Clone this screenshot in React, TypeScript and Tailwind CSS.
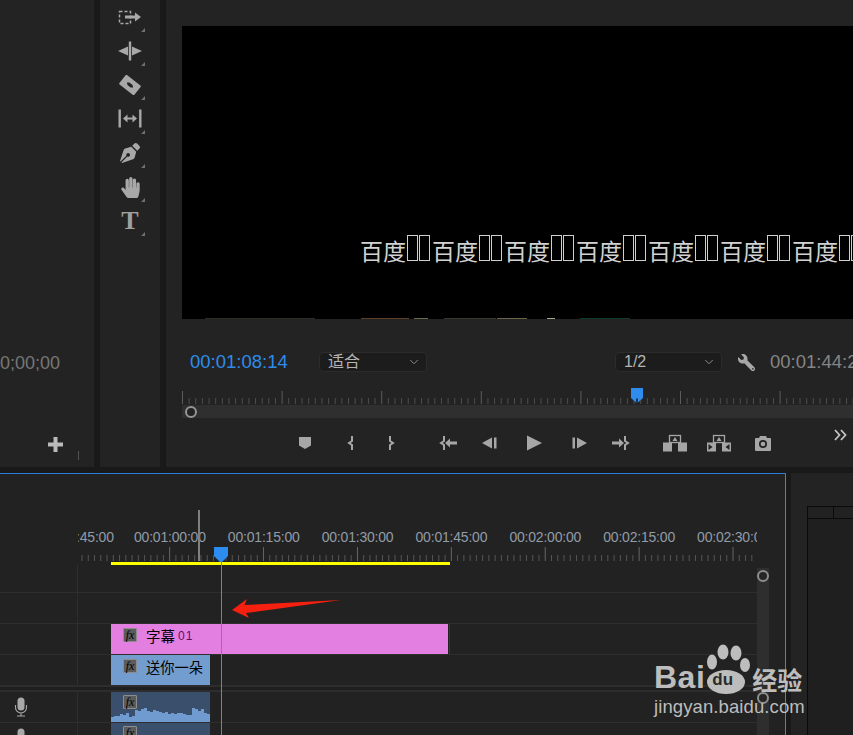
import { ChevronDown } from 'lucide-react';
import { FaHandPaper, FaPenNib, FaWrench } from 'react-icons/fa';
import type { ReactNode } from 'react';

const rulerLabels = ['00:00:45:00', '00:01:00:00', '00:01:15:00', '00:01:30:00', '00:01:45:00', '00:02:00:00', '00:02:15:00', '00:02:30:00'];
const wave = [5, 6, 6, 8, 7, 9, 5, 6, 12, 11, 13, 14, 11, 10, 12, 11, 10, 9, 10, 8, 9, 8, 9, 9, 8, 7, 7, 14, 13, 11, 13, 9, 8];
const noise = [
  [23, 110, '#2c2c26'], [179, 48, '#5a3f26'], [232, 14, '#6a6a50'], [262, 52, '#3a382c'], [315, 30, '#6e6248'], [365, 8, '#a8a488'], [398, 50, '#0f3a30'],
];

function Corner() {
  return <span className="absolute bottom-[2px] right-[15px] h-0 w-0 border-b-[4px] border-l-[4px] border-b-[#707070] border-l-transparent" />;
}

function Tool({ children }: { children: ReactNode }) {
  return (
    <div className="relative flex h-[34px] items-center justify-center text-[#a8a8a8]">
      {children}
      <Corner />
    </div>
  );
}

function ToolIcon({ children }: { children: ReactNode }) {
  return (
    <svg width="26" height="20" viewBox="0 0 26 20" fill="currentColor">
      {children}
    </svg>
  );
}

function CtrlIcon({ children, className = '', w = 20 }: { children: ReactNode; className?: string; w?: number }) {
  return (
    <svg width={w} height="20" viewBox={`0 0 ${w} 20`} fill="#a6a6a6" className={`shrink-0 ${className}`}>
      {children}
    </svg>
  );
}

function Select({ label, className = '' }: { label: string; className?: string }) {
  return (
    <div className={`flex h-[20px] shrink-0 items-center justify-between rounded-sm border border-[#2c2c2c] bg-[#1c1c1c] pl-2 pr-1 text-[#b4b4b4] ${className}`}>
      <span className="text-[16px] leading-none">{label}</span>
      <ChevronDown size={14} strokeWidth={1.5} className="mr-[1px] text-[#9a9a9a]" />
    </div>
  );
}

function Fx() {
  return (
    <span className="flex h-[14px] w-[14px] shrink-0 items-center justify-center rounded-[1px] border border-[#8c8c8c] bg-[#5c5c5c] font-['Liberation_Serif',serif] text-[12px] italic leading-none text-black">
      fx
    </span>
  );
}

function Mic() {
  return (
    <svg width="14" height="20" viewBox="0 0 14 20" className="ml-[14px] shrink-0">
      <rect x="3.5" y="0.5" width="7" height="13" rx="3.5" fill="#a8a8a8" />
      <path d="M1.5 8v2.5a5.5 5.5 0 0 0 11 0V8M7 16v2.5M3 19h8" fill="none" stroke="#a8a8a8" strokeWidth="1.1" />
    </svg>
  );
}

function Track({ h, head, children }: { h: string; head?: ReactNode; children?: ReactNode }) {
  return (
    <div className={`flex border-b border-[#2e2e2e] ${h}`}>
      <div className="flex w-[78px] shrink-0 items-start border-r border-[#2e2e2e] pt-[5px]">{head}</div>
      <div className="flex min-w-0 flex-1 pl-[33px]">{children}</div>
    </div>
  );
}

function ToolsColumn() {
  return (
    <div className="w-[60px] shrink-0 bg-[#232323]">
      <Tool>
        <ToolIcon>
          <rect x="2.5" y="4.5" width="11" height="12" fill="none" stroke="currentColor" strokeWidth="1.5" strokeDasharray="3 2" />
          <polygon points="8,8.5 18,8.5 18,5.5 24,10 18,14.5 18,11.5 8,11.5" />
        </ToolIcon>
      </Tool>
      <Tool>
        <ToolIcon>
          <rect x="11.8" y="0.5" width="2.4" height="19" />
          <polygon points="1,10 11,5.5 11,14.5" />
          <polygon points="15,5.5 15,14.5 25,10" />
        </ToolIcon>
      </Tool>
      <Tool>
        <ToolIcon>
          <g transform="rotate(38 13 10)">
            <rect x="3.5" y="4" width="19" height="12" rx="1" />
            <polygon points="9,10 11,8.5 15,8.5 17,10 15,11.5 11,11.5" fill="#232323" />
          </g>
        </ToolIcon>
      </Tool>
      <Tool>
        <ToolIcon>
          <rect x="1.5" y="0.5" width="2.4" height="18" />
          <rect x="22.1" y="0.5" width="2.4" height="18" />
          <polygon points="6,9.5 10.5,5.5 10.5,8.5 15.5,8.5 15.5,5.5 20,9.5 15.5,13.5 15.5,10.5 10.5,10.5 10.5,13.5" />
        </ToolIcon>
      </Tool>
      <Tool>
        <FaPenNib size={20} />
      </Tool>
      <Tool>
        <FaHandPaper size={21} />
      </Tool>
      <Tool>
        <span className="font-['Liberation_Serif',serif] text-[26px] font-bold leading-none text-[#a0a0a0]">T</span>
      </Tool>
    </div>
  );
}

function MonitorRuler() {
  const ticks = [];
  for (let i = 0; i < 102; i++) {
    const major = i % 15 === 0;
    ticks.push(<line key={i} x1={i * 6.64 + 0.5} x2={i * 6.64 + 0.5} y1={major ? 3 : 10} y2={16} stroke={major ? '#5c5c5c' : '#4e4e4e'} />);
  }
  return (
    <div className="relative h-[17px]">
      <svg width="671" height="17">{ticks}</svg>
      <svg width="14" height="16" viewBox="0 0 14 16" className="absolute left-[448px] top-[-1px]">
        <path d="M1 1h12v10l-5 4.5h-2l-5-4.5z" fill="#2f8bec" />
        <rect x="6.3" y="11.5" width="1.4" height="4" fill="#111" />
      </svg>
    </div>
  );
}

function Monitor() {
  return (
    <div className="min-w-0 flex-1 overflow-hidden bg-[#232323] pl-4 pt-[26px]">
      <div className="relative flex h-[293px] items-end overflow-hidden bg-black pb-[54px] pl-[178px] font-['Noto_Sans_CJK_SC','Liberation_Sans',sans-serif] text-[#d2d2d2]">
        {[0, 1, 2, 3, 4, 5, 6].map((i) => (
          <div key={i} className="flex shrink-0 items-end">
            <span className="w-[47px] whitespace-nowrap text-[23px] leading-[30px]">百度</span>
            <span className="mb-[4px] h-[26px] w-[11px] border border-[#cfcfcf]" />
            <span className="mb-[4px] ml-[1px] mr-[2px] h-[26px] w-[11px] border border-[#cfcfcf]" />
          </div>
        ))}
        <svg width="671" height="1" className="absolute bottom-0 left-0">
          {noise.map(([x, w, c]) => (
            <rect key={x as number} x={x as number} y="0" width={w as number} height="1" fill={c as string} />
          ))}
        </svg>
      </div>

      <div className="mt-[33px] flex h-[20px] items-center whitespace-nowrap pl-2">
        <span className="w-[129px] shrink-0 text-[18.5px] leading-none text-[#2d8ceb]">00:01:08:14</span>
        <Select label="适合" className="w-[108px]" />
        <Select label="1/2" className="ml-[188px] w-[107px]" />
        <FaWrench size={17} className="ml-[16px] shrink-0 -scale-x-100 text-[#a8a8a8]" />
        <span className="ml-[15px] shrink-0 text-[18.5px] leading-none text-[#858585]">00:01:44:22</span>
      </div>

      <div className="mt-[16px]">
        <MonitorRuler />
      </div>
      <div className="flex h-[13px] items-center bg-[#2f2f2f] pl-[3px]">
        <span className="h-[12px] w-[12px] rounded-full border-[2.5px] border-[#969696] bg-[#232323]" />
      </div>

      <div className="ml-[-16px] mt-[15px] flex h-[20px] pl-[129px]">
        <CtrlIcon>
          <polygon points="4,4 16,4 16,12.5 10,16 4,12.5" />
        </CtrlIcon>
        <CtrlIcon className="ml-[26px]">
          <path d="M11 3v5l-3 2 3 2v5" fill="none" stroke="#a6a6a6" strokeWidth="2" />
        </CtrlIcon>
        <CtrlIcon className="ml-[20px]">
          <path d="M9 3v5l3 2-3 2v5" fill="none" stroke="#a6a6a6" strokeWidth="2" />
        </CtrlIcon>
        <CtrlIcon className="ml-[37px]">
          <path d="M6 3v5l-3 2 3 2v5" fill="none" stroke="#a6a6a6" strokeWidth="2" />
          <polygon points="7,10 12,5.5 12,8.5 19,8.5 19,11.5 12,11.5 12,14.5" />
        </CtrlIcon>
        <CtrlIcon className="ml-[22px]">
          <polygon points="2,10 12,4.5 12,15.5" />
          <rect x="14" y="4.5" width="2.5" height="11" />
        </CtrlIcon>
        <CtrlIcon className="ml-[24px]">
          <polygon points="3,2.5 18,10 3,17.5" />
        </CtrlIcon>
        <CtrlIcon className="ml-[25px]">
          <rect x="3.5" y="4.5" width="2.5" height="11" />
          <polygon points="8,4.5 18,10 8,15.5" />
        </CtrlIcon>
        <CtrlIcon className="ml-[22px]">
          <polygon points="1,8.5 8,8.5 8,5.5 13,10 8,14.5 8,11.5 1,11.5" />
          <path d="M14 3v5l3 2-3 2v5" fill="none" stroke="#a6a6a6" strokeWidth="2" />
        </CtrlIcon>
        <CtrlIcon w={24} className="ml-[32px]">
          <rect x="0" y="9.5" width="9" height="9" />
          <rect x="15" y="9.5" width="9" height="9" />
          <rect x="6.5" y="2.5" width="11" height="7" fill="none" stroke="#a6a6a6" strokeWidth="1.3" />
          <polygon points="12,4 9.5,8 14.5,8" />
        </CtrlIcon>
        <CtrlIcon w={24} className="ml-[20px]">
          <rect x="0" y="9.5" width="9" height="9" />
          <rect x="15" y="9.5" width="9" height="9" />
          <polygon points="1.5,11 5.5,14 1.5,17" fill="#232323" />
          <polygon points="22.5,11 18.5,14 22.5,17" fill="#232323" />
          <rect x="6.5" y="2.5" width="11" height="7" fill="none" stroke="#a6a6a6" strokeWidth="1.3" />
          <polygon points="12,4 9.5,8 14.5,8" />
        </CtrlIcon>
        <CtrlIcon className="ml-[22px]">
          <path d="M6 5l1-2h6l1 2h3a1 1 0 0 1 1 1v11a1 1 0 0 1-1 1H3a1 1 0 0 1-1-1V6a1 1 0 0 1 1-1z" />
          <circle cx="10" cy="11" r="3.2" fill="none" stroke="#232323" strokeWidth="1.7" />
        </CtrlIcon>
        <svg width="14" height="14" viewBox="0 0 14 14" className="ml-[60px] mt-[-5px] shrink-0">
          <path d="M2 2l4.5 5L2 12M8 2l4.5 5L8 12" fill="none" stroke="#c4c4c4" strokeWidth="1.8" />
        </svg>
      </div>
    </div>
  );
}

function TimelineRuler() {
  const ticks = [];
  for (let i = 0; i < 108; i++) {
    const x = 4 + i * 6.26;
    const major = (i - 14) % 15 === 0;
    ticks.push(<line key={i} x1={x} x2={x} y1={major ? 0 : 8} y2={14} stroke={major ? '#666666' : '#565656'} />);
  }
  return (
    <div className="h-[91px] w-[679px] overflow-hidden pt-[55px]">
      <div className="ml-[-36px] flex h-[16px] items-center">
        {rulerLabels.map((t, i) => (
          <span key={t} className={`${i === 0 ? 'w-[92px]' : 'w-[93.85px]'} shrink-0 whitespace-nowrap text-[14px] leading-none tracking-[-0.2px] text-[#919ca7]`}>
            {t}
          </span>
        ))}
      </div>
      <svg width="679" height="14" className="mt-[2px] block">{ticks}</svg>
      <div className="ml-[33px] mt-[1px] h-[3px] w-[339px] bg-[#ffff00]" />
    </div>
  );
}

function Timeline() {
  return (
    <div className="relative flex w-[786px] shrink-0 overflow-hidden border-r border-t border-r-[#1f8cff] border-t-[#2a80d8] bg-[#222222]">
      <div className="w-[757px] shrink-0">
        <div className="flex">
          <div className="w-[78px] shrink-0" />
          <TimelineRuler />
        </div>
        <Track h="h-[28px]" />
        <Track h="h-[31px]" />
        <Track h="h-[31px]">
          <div className="flex h-[30px] w-[337px] items-start bg-[#e47fe2] pl-[12px] pt-[4px] font-['Noto_Sans_CJK_SC',sans-serif] text-black">
            <Fx />
            <span className="ml-[9px] text-[14.5px] leading-[15px]">字幕</span>
            <span className="ml-[3px] font-['Liberation_Sans',sans-serif] text-[12px] leading-[16px] tracking-[1px] text-[#5a0f6a]">01</span>
          </div>
          <div className="ml-[1px] h-[30px] w-px bg-[#383838]" />
        </Track>
        <div className="flex h-[30px]">
          <div className="w-[78px] shrink-0 border-r border-[#2e2e2e]" />
          <div className="ml-[33px] flex h-[30px] w-[99px] items-start bg-[#739dcf] pl-[12px] pt-[4px] font-['Noto_Sans_CJK_SC',sans-serif] text-black">
            <Fx />
            <span className="ml-[9px] whitespace-nowrap text-[14.25px] leading-[15px]">送你一朵</span>
          </div>
        </div>
        <div className="h-[2px] bg-[#2d2d2d]" />
        <div className="h-[3px] bg-[#1f1f1f]" />
        <div className="h-[2px] bg-[#2d2d2d]" />
        <Track h="h-[31px]" head={<Mic />}>
          <div className="relative h-[30px] w-[99px] bg-[#3a4f6c] pl-[12px] pt-[3px]">
            <svg width="99" height="30" className="absolute left-0 top-0">
              {wave.map((v, i) => (
                <rect key={i} x={i * 3} y={30 - v} width="3" height={v} fill="#6f9bd0" />
              ))}
            </svg>
            <div className="relative">
              <Fx />
            </div>
          </div>
        </Track>
        <Track h="h-[31px]" head={<Mic />}>
          <div className="h-[30px] w-[99px] bg-[#3a4f6c] pl-[12px] pt-[3px]">
            <Fx />
          </div>
        </Track>
      </div>

      <div className="mt-[94px] flex w-[12px] shrink-0 flex-col items-center bg-[#2e2e2e] pt-[2px]">
        <span className="h-[12px] w-[12px] shrink-0 rounded-full border-[2.5px] border-[#8e8e8e] bg-[#262626]" />
        <span className="mt-[110px] h-[12px] w-[12px] shrink-0 rounded-full border-[2.5px] border-[#8e8e8e] bg-[#262626]" />
      </div>

      {/* playhead, in/out handle and the arrow sit on top of the tracks */}
      <div className="absolute left-[198px] top-[36px] h-[51px] w-[2px] bg-[#7f7f7f]" />
      <svg width="14" height="15" viewBox="0 0 14 15" className="absolute left-[214px] top-[73px]">
        <path d="M0 0h14v9l-6 6h-2l-6-6z" fill="#2d8cf0" />
      </svg>
      <div className="absolute bottom-0 left-[221px] top-[87px] w-px bg-[#3f90e4]" />
      <svg width="112" height="22" viewBox="0 0 112 22" className="absolute left-[231px] top-[124px]">
        <polygon points="1,12 16,1 13.5,7 110,2 15,15 18,20" fill="#f5200f" />
      </svg>
    </div>
  );
}

function Watermark() {
  return (
    <div className="pointer-events-none absolute left-[654px] top-[640px] w-[155px] text-[#bdbdbd]">
      <div className="flex h-[55px] items-end">
        <span className="text-[32px] font-bold leading-[36px] tracking-[0.5px]">Bai</span>
        <div className="relative ml-[1px] h-[55px] w-[46px] shrink-0">
          <svg width="46" height="55" viewBox="0 0 46 55" className="absolute left-0 top-0">
            <ellipse cx="17" cy="12" rx="5.5" ry="7.5" fill="#bdbdbd" />
            <ellipse cx="30" cy="13" rx="5.5" ry="7.5" fill="#bdbdbd" />
            <ellipse cx="6" cy="22" rx="5" ry="7.5" fill="#bdbdbd" />
            <ellipse cx="39" cy="25" rx="5" ry="7" fill="#bdbdbd" />
            <ellipse cx="20" cy="42" rx="19" ry="12" fill="#bdbdbd" />
          </svg>
          <span className="absolute left-[6px] top-[31px] text-[17px] font-bold leading-none text-[#2a2a2a]">du</span>
        </div>
        <span className="whitespace-nowrap font-['Noto_Sans_CJK_SC',sans-serif] text-[25px] font-bold leading-[32px]">经验</span>
      </div>
      <div className="mt-[2px] whitespace-nowrap text-[18.5px] leading-[20px] tracking-[0.1px]">jingyan.baidu.com</div>
    </div>
  );
}

export default function App() {
  return (
    <div className="relative flex h-[735px] w-[853px] flex-col overflow-hidden bg-[#191919] font-['Liberation_Sans','Noto_Sans_CJK_SC',sans-serif]">
      <div className="flex h-[467px] shrink-0 gap-[6px]">
        <div className="w-[94px] shrink-0 overflow-hidden bg-[#232323] pt-[355px]">
          <div className="flex w-[60px] justify-end overflow-hidden text-[18px] leading-4 text-[#777777]">
            <span className="shrink-0">00;00;00</span>
          </div>
          <div className="mt-[66px] flex items-start pl-[48px]">
            <svg width="15" height="15" viewBox="0 0 15 15" className="shrink-0">
              <path d="M5.5 0h4v5.5H15v4H9.5V15h-4V9.5H0v-4h5.5z" fill="#bababa" />
            </svg>
            <span className="ml-[15px] mt-[14px] h-[9px] w-px bg-[#555555]" />
          </div>
        </div>
        <ToolsColumn />
        <Monitor />
      </div>

      <div className="mt-[6px] flex min-h-0 flex-1">
        <Timeline />
        <div className="ml-[5px] flex-1 bg-[#232323] pl-4 pt-[33px]">
          <div className="h-full border-l border-t border-[#0a0a0a] bg-[#1f1f1f]">
            <div className="flex h-[12px] border-b border-[#0a0a0a] bg-[#222222]">
              <div className="w-[26px] border-r border-[#0a0a0a]" />
            </div>
          </div>
        </div>
      </div>

      <Watermark />
    </div>
  );
}
